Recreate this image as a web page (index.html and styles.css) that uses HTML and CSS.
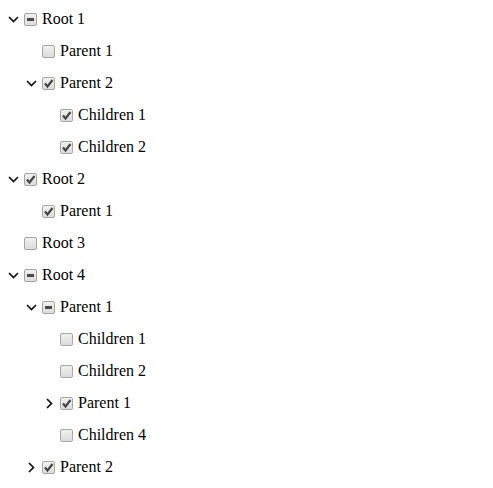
FILE: index.html
```html
<!DOCTYPE html>
<html>
<head>
<meta charset="utf-8">
<link rel="stylesheet" href="styles.css">
</head>
<body>
<div class="tree">
  <div class="row l0"><span class="sw down"><svg width="11" height="7" viewBox="0 0 11 7"><polyline points="1,1 5.5,5.5 10,1"/></svg></span><span class="cb ind"></span><span class="lbl">Root 1</span></div>
  <div class="row l1"><span class="sw"></span><span class="cb"></span><span class="lbl">Parent 1</span></div>
  <div class="row l1"><span class="sw down"><svg width="11" height="7" viewBox="0 0 11 7"><polyline points="1,1 5.5,5.5 10,1"/></svg></span><span class="cb chk"><svg width="13" height="13" viewBox="0 0 13 13"><path d="M3 6.5 L5.5 9.5 L10.5 3"/></svg></span><span class="lbl">Parent 2</span></div>
  <div class="row l2"><span class="sw"></span><span class="cb chk"><svg width="13" height="13" viewBox="0 0 13 13"><path d="M3 6.5 L5.5 9.5 L10.5 3"/></svg></span><span class="lbl">Children 1</span></div>
  <div class="row l2"><span class="sw"></span><span class="cb chk"><svg width="13" height="13" viewBox="0 0 13 13"><path d="M3 6.5 L5.5 9.5 L10.5 3"/></svg></span><span class="lbl">Children 2</span></div>
  <div class="row l0"><span class="sw down"><svg width="11" height="7" viewBox="0 0 11 7"><polyline points="1,1 5.5,5.5 10,1"/></svg></span><span class="cb chk"><svg width="13" height="13" viewBox="0 0 13 13"><path d="M3 6.5 L5.5 9.5 L10.5 3"/></svg></span><span class="lbl">Root 2</span></div>
  <div class="row l1"><span class="sw"></span><span class="cb chk"><svg width="13" height="13" viewBox="0 0 13 13"><path d="M3 6.5 L5.5 9.5 L10.5 3"/></svg></span><span class="lbl">Parent 1</span></div>
  <div class="row l0"><span class="sw"></span><span class="cb"></span><span class="lbl">Root 3</span></div>
  <div class="row l0"><span class="sw down"><svg width="11" height="7" viewBox="0 0 11 7"><polyline points="1,1 5.5,5.5 10,1"/></svg></span><span class="cb ind"></span><span class="lbl">Root 4</span></div>
  <div class="row l1"><span class="sw down"><svg width="11" height="7" viewBox="0 0 11 7"><polyline points="1,1 5.5,5.5 10,1"/></svg></span><span class="cb ind"></span><span class="lbl">Parent 1</span></div>
  <div class="row l2"><span class="sw"></span><span class="cb"></span><span class="lbl">Children 1</span></div>
  <div class="row l2"><span class="sw"></span><span class="cb"></span><span class="lbl">Children 2</span></div>
  <div class="row l2"><span class="sw right"><svg width="7" height="11" viewBox="0 0 7 11"><polyline points="1,1 5.5,5.5 1,10"/></svg></span><span class="cb chk"><svg width="13" height="13" viewBox="0 0 13 13"><path d="M3 6.5 L5.5 9.5 L10.5 3"/></svg></span><span class="lbl">Parent 1</span></div>
  <div class="row l2"><span class="sw"></span><span class="cb"></span><span class="lbl">Children 4</span></div>
  <div class="row l1"><span class="sw right"><svg width="7" height="11" viewBox="0 0 7 11"><polyline points="1,1 5.5,5.5 1,10"/></svg></span><span class="cb chk"><svg width="13" height="13" viewBox="0 0 13 13"><path d="M3 6.5 L5.5 9.5 L10.5 3"/></svg></span><span class="lbl">Parent 2</span></div>
</div>
</body>
</html>
```

FILE: styles.css
```css
html, body {
  margin: 0;
  padding: 0;
  background: #fff;
}
body {
  font-family: "Liberation Serif", Tinos, "Times New Roman", Times, "Noto Serif", "DejaVu Serif", FreeSerif, serif;
  font-size: 16px;
  color: #000;
}
.tree {
  padding-top: 3px;
  display: flex;
  flex-direction: column;
}
.row {
  height: 32px;
  display: flex;
  align-items: center;
  padding-left: 4px;
}
.row.l1 { padding-left: 22px; }
.row.l2 { padding-left: 40px; }
.sw {
  width: 18px;
  height: 13px;
  display: flex;
  align-items: center;
  justify-content: center;
}
.sw svg polyline {
  fill: none;
  stroke: #111;
  stroke-width: 1.7;
}
.sw.down svg { margin-top: 1px; }
.sw.right svg { margin-left: 1px; }
.cb {
  box-sizing: border-box;
  width: 13px;
  height: 13px;
  margin-left: 2px;
  border: 1px solid #a6a6a6;
  border-radius: 2px;
  background: linear-gradient(#f0f0f0, #dcdcdc);
  position: relative;
  display: block;
}
.cb svg {
  position: absolute;
  left: -1px;
  top: -1px;
}
.cb svg path {
  fill: none;
  stroke: #444;
  stroke-width: 2.2;
}
.cb.ind::after {
  content: "";
  position: absolute;
  left: 2px;
  right: 2px;
  top: 4px;
  height: 3px;
  background: #4a4a4a;
}
.lbl {
  margin-left: 5px;
  line-height: 18px;
}
```
